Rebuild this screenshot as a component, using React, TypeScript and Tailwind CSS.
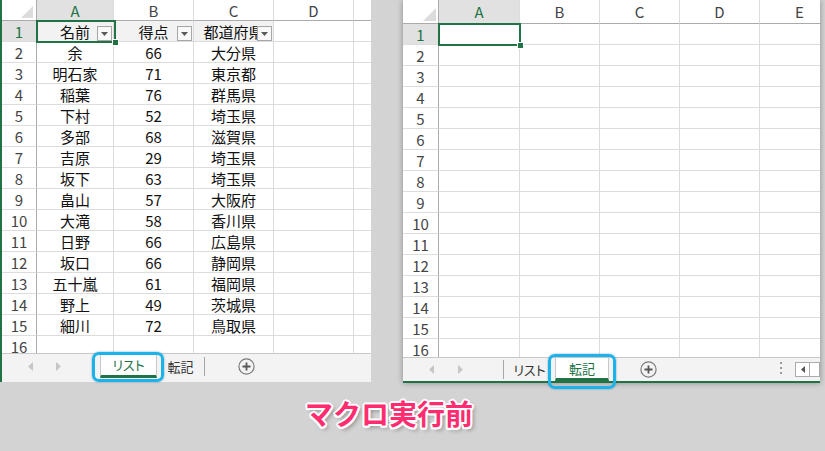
import React from "react";

const leftData: string[][] = [
  ["名前", "得点", "都道府県"],
  ["余", "66", "大分県"],
  ["明石家", "71", "東京都"],
  ["稲葉", "76", "群馬県"],
  ["下村", "52", "埼玉県"],
  ["多部", "68", "滋賀県"],
  ["吉原", "29", "埼玉県"],
  ["坂下", "63", "埼玉県"],
  ["畠山", "57", "大阪府"],
  ["大滝", "58", "香川県"],
  ["日野", "66", "広島県"],
  ["坂口", "66", "静岡県"],
  ["五十嵐", "61", "福岡県"],
  ["野上", "49", "茨城県"],
  ["細川", "72", "鳥取県"],
];

const letters = ["A", "B", "C", "D", "E"];

const ArrowL = () => (
  <svg width="5" height="9" viewBox="0 0 5 9">
    <path d="M5 0L0 4.5L5 9Z" fill="#c6c6c6" />
  </svg>
);

const ArrowR = () => (
  <svg width="5" height="9" viewBox="0 0 5 9">
    <path d="M0 0L5 4.5L0 9Z" fill="#c6c6c6" />
  </svg>
);

const PlusCircle = () => (
  <svg width="17" height="17" viewBox="0 0 17 17">
    <circle cx="8.5" cy="8.5" r="7.6" fill="none" stroke="#7a7a7a" strokeWidth="1.2" />
    <path d="M8.5 4.5v8M4.5 8.5h8" stroke="#555" strokeWidth="1.8" />
  </svg>
);

const FilterBtn = () => (
  <div className="absolute right-[1px] bottom-0 w-[15px] h-[15px] border border-[#a6a6a6] bg-[#f8f8f8] flex items-center justify-center">
    <svg width="7" height="4" viewBox="0 0 7 4">
      <path d="M0 0h7L3.5 4Z" fill="#5a5a5a" />
    </svg>
  </div>
);

type GridProps = {
  height: string;
  headH: string;
  rowHeadW: string;
  colW: string[];
  corner: string;
  selBox: string;
  rows?: string[][];
};

const Grid = ({ height, headH, rowHeadW, colW, corner, selBox, rows = [] }: GridProps) => (
  <div className={`${height} overflow-hidden bg-white`}>
    <div className={`flex ${headH}`}>
      <div className={`${rowHeadW} shrink-0 relative border-r border-b border-[#ababab]`}>
        <div className={`absolute ${corner} w-0 h-0 border-l-transparent border-b-[#dcdcdc]`} />
      </div>
      {colW.map((w, i) => (
        <div
          key={i}
          className={`${w} shrink-0 flex items-center justify-center text-[15px] border-r border-r-[#dcdcdc] border-b border-b-[#ababab] ${
            i === 0 ? "bg-[#e1e1e1] text-[#217346]" : "text-[#444]"
          }`}
        >
          {letters[i]}
        </div>
      ))}
    </div>
    {Array.from({ length: 16 }, (_, r) => (
      <div key={r} className="flex h-[21px]">
        <div
          className={`${rowHeadW} shrink-0 flex items-center justify-center text-[15px] border-r border-r-[#ababab] border-b border-b-[#dcdcdc] ${
            r === 0 ? "bg-[#e1e1e1] text-[#217346]" : "text-[#444]"
          }`}
        >
          {r + 1}
        </div>
        {colW.map((w, c) => {
          const v = rows[r]?.[c] ?? "";
          const head = r === 0 && rows.length > 0 && c < 3;
          return (
            <div
              key={c}
              className={`${w} shrink-0 relative flex items-center justify-center text-[15px] text-[#111] whitespace-nowrap border-r border-b border-[#dcdcdc] ${
                head ? "bg-[#f2f2f2]" : ""
              }`}
            >
              {v}
              {head && <FilterBtn />}
              {r === 0 && c === 0 && (
                <div className={`absolute ${selBox} border-2 border-[#217346] z-10`}>
                  <div className="absolute -right-[5px] -bottom-[5px] w-[7px] h-[7px] bg-[#217346] border border-white" />
                </div>
              )}
            </div>
          );
        })}
      </div>
    ))}
  </div>
);

const Highlight = ({ pos }: { pos: string }) => (
  <div
    className={`absolute ${pos} rounded-[7px] border-[3px] border-[#1bb3ea] shadow-[0_0_2px_rgba(0,90,140,0.6)] z-20`}
  />
);

const LeftSheet = () => (
  <div className="w-[371px] h-[382px] bg-[#f3f3f3] border-l-2 border-[#217346] flex flex-col">
    <Grid
      height="h-[353px]"
      headH="h-[21px]"
      rowHeadW="w-[35px]"
      colW={["w-[77px]", "w-[80px]", "w-[80px]", "w-[80px]", "w-[80px]"]}
      corner="right-[3px] bottom-[2px] border-l-[12px] border-b-[12px]"
      selBox="-left-[1px] -top-[1px] w-[80px] h-[23px]"
      rows={leftData}
    />
    <div className="relative h-[27px] flex items-start border-t border-[#c8c8c8] text-[13px] [font-feature-settings:'palt']">
      <div className="w-[98px] h-[24px] flex items-center pl-[26px] gap-[23px]">
        <ArrowL />
        <ArrowR />
      </div>
      <div className="w-[57px] h-[24px] bg-white border-x border-[#c8c8c8] border-b-[3px] border-b-[#217346] flex items-center justify-center text-[#217346]">
        リスト
      </div>
      <div className="w-[47px] h-[24px] flex items-center justify-center text-[#333]">転記</div>
      <div className="w-px h-[19px] mt-[3px] bg-[#a6a6a6]" />
      <div className="ml-[33px] mt-[4px] flex">
        <PlusCircle />
      </div>
      <Highlight pos="left-[90px] -top-[2px] w-[72px] h-[30px]" />
    </div>
  </div>
);

const RightSheet = () => (
  <div className="ml-[32px] w-[417px] h-[383px] bg-[#f3f3f3] flex flex-col shadow-[0_0_6px_rgba(0,0,0,0.35)]">
    <Grid
      height="h-[357px]"
      headH="h-[24px]"
      rowHeadW="w-[36px]"
      colW={["w-[81px]", "w-[80px]", "w-[80px]", "w-[80px]", "w-[80px]"]}
      corner="right-[2px] bottom-[2px] border-l-[13px] border-b-[13px]"
      selBox="-left-[1px] -top-[1px] w-[83px] h-[23px]"
    />
    <div className="relative h-[24px] flex items-start border-t border-[#c8c8c8] text-[13px] [font-feature-settings:'palt']">
      <div className="w-[100px] h-[23px] flex items-center pl-[26px] gap-[24px]">
        <ArrowL />
        <ArrowR />
      </div>
      <div className="w-px h-[19px] mt-[2px] bg-[#a6a6a6]" />
      <div className="w-[51px] h-[23px] flex items-center justify-center text-[#333]">リスト</div>
      <div className="w-[54px] h-[23px] bg-white border-x border-[#c8c8c8] border-b-[3px] border-b-[#217346] flex items-center justify-center text-[#217346]">
        転記
      </div>
      <div className="ml-[31px] mt-[3px] flex">
        <PlusCircle />
      </div>
      <div className="ml-auto mt-[4px] flex flex-col gap-[3px] items-center w-[4px] mr-[12px]">
        <div className="w-[2px] h-[2px] bg-[#999]" />
        <div className="w-[2px] h-[2px] bg-[#999]" />
        <div className="w-[2px] h-[2px] bg-[#999]" />
      </div>
      <div className="mt-[4px] w-[25px] h-[15px] border border-[#ababab] bg-white flex">
        <div className="w-[14px] border-r border-[#ababab] flex items-center justify-center">
          <svg width="4" height="7" viewBox="0 0 4 7">
            <path d="M4 0L0 3.5L4 7Z" fill="#555" />
          </svg>
        </div>
      </div>
      <Highlight pos="left-[145px] -top-[4px] w-[68px] h-[35px]" />
    </div>
    <div className="h-[2px] bg-[#217346]" />
  </div>
);

export default function App() {
  return (
    <div className="w-[825px] h-[451px] bg-[#d3d3d3] overflow-hidden font-['Noto_Sans_CJK_JP',sans-serif] leading-none">
      <div className="flex items-start">
        <LeftSheet />
        <RightSheet />
      </div>
      <div className="pl-[305px] mt-[16px]">
        <span className="text-[28px] font-bold text-[#ff2d6f] [text-shadow:2px_0_#fff,-2px_0_#fff,0_2px_#fff,0_-2px_#fff,1.5px_1.5px_#fff,-1.5px_-1.5px_#fff,1.5px_-1.5px_#fff,-1.5px_1.5px_#fff,3px_3px_4px_rgba(0,0,0,0.35)]">
          マクロ実行前
        </span>
      </div>
    </div>
  );
}
